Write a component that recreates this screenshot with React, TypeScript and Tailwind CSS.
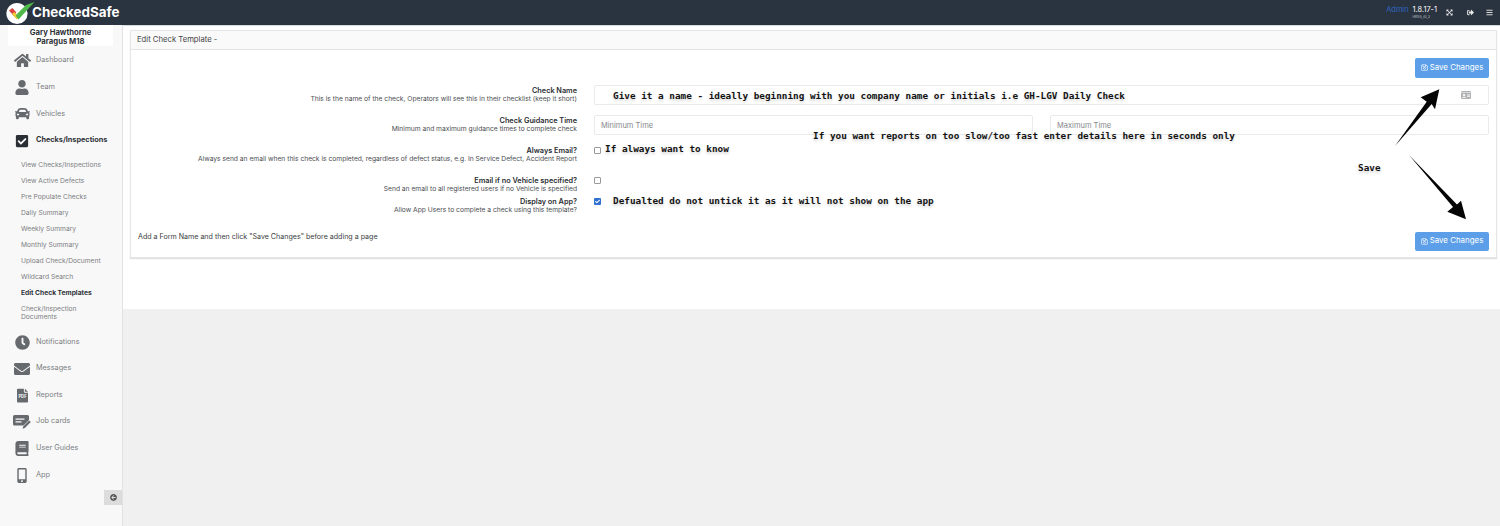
import React from "react";
import {
  FaHome, FaUser, FaCar, FaCheckSquare, FaClock, FaEnvelope, FaBook, FaMobileAlt,
  FaExpandArrowsAlt, FaSignOutAlt, FaBars, FaRegSave, FaIdCard, FaArrowCircleLeft, FaCheck,
} from "react-icons/fa";

const JobCard = ({ className }: { className?: string }) => (
  <svg viewBox="0 0 18 14" className={className} fill="currentColor">
    <path d="M1.5 0h13A1.5 1.5 0 0 1 16 1.5V5l-5.5 5.5H1.5A1.5 1.5 0 0 1 0 9V1.5A1.5 1.5 0 0 1 1.5 0z" />
    <path d="M2.5 3.5h9v1.3h-9zM2.5 6.3h6v1.3h-6z" fill="#f8f8f8" />
    <path d="M16.2 5.5l1.6 1.6-6 6-2.2.6.6-2.2z" />
  </svg>
);

const PdfFile = ({ className }: { className?: string }) => (
  <svg viewBox="0 0 12 15" className={className} fill="currentColor">
    <path d="M1 0h6.5v3.5a1 1 0 0 0 1 1H12V14a1 1 0 0 1-1 1H1a1 1 0 0 1-1-1V1a1 1 0 0 1 1-1z" />
    <path d="M8.5 0L12 3.5H8.5z" />
    <text x="6" y="10.6" textAnchor="middle" fontSize="4.6" fontWeight="700" fill="#f8f8f8" fontFamily="Inter, sans-serif">PDF</text>
  </svg>
);

const topNav = [
  { label: "Dashboard", icon: FaHome, size: "w-[17px] h-[17px]" },
  { label: "Team", icon: FaUser, size: "w-[14px] h-[15px]" },
  { label: "Vehicles", icon: FaCar, size: "w-[15px] h-[15px]" },
];
const subNav = ["View Checks/Inspections", "View Active Defects", "Pre Populate Checks", "Daily Summary", "Weekly Summary", "Monthly Summary", "Upload Check/Document", "Wildcard Search"];
const lowNav = [
  { label: "Notifications", icon: FaClock, size: "w-[15px] h-[15px]" },
  { label: "Messages", icon: FaEnvelope, size: "w-[16px] h-[16px]" },
  { label: "Reports", icon: PdfFile, size: "w-[11px] h-[15px]" },
  { label: "Job cards", icon: JobCard, size: "w-[18px] h-[14px]" },
  { label: "User Guides", icon: FaBook, size: "w-[14px] h-[15px]" },
  { label: "App", icon: FaMobileAlt, size: "w-[14px] h-[15px]" },
];

const NavRow = ({ label, icon: Icon, size, bold }: any) => (
  <div className="flex items-center h-[26.6px]">
    <div className="w-[36px] shrink-0 flex justify-center pl-[8px]">
      <Icon className={`${size} ${bold ? "text-[#2a2f36]" : "text-[#666a6e]"}`} />
    </div>
    <span className={bold ? "text-[7.3px] font-bold text-[#2f3338]" : "text-[7.3px] text-[#7c7f83]"}>{label}</span>
  </div>
);

const SaveButton = () => (
  <button className="w-[74px] h-[19.5px] rounded-[2px] bg-[#5c9fe8] text-white text-[7.9px] flex items-center justify-center gap-[2px] shrink-0">
    <FaRegSave className="w-[7px] h-[7px]" />
    Save Changes
  </button>
);

const Label = ({ title, sub }: { title: string; sub: string }) => (
  <div className="w-[439px] text-right leading-[9px] shrink-0">
    <div className="text-[7.3px] font-semibold text-[#2a2d31]">{title}</div>
    <div className="text-[6.7px] text-[#4a4d52]">{sub}</div>
  </div>
);

const Note = ({ className, children }: { className: string; children: React.ReactNode }) => (
  <div className={`absolute font-['DejaVu_Sans_Mono',monospace] font-bold text-[9.36px] leading-[12px] text-[#141414] whitespace-nowrap [text-shadow:0_2px_3px_rgba(0,0,0,0.18)] ${className}`}>{children}</div>
);

const Check = ({ checked }: { checked?: boolean }) =>
  checked ? (
    <span className="ml-[17px] w-[7px] h-[7px] mt-[1px] rounded-[1px] bg-[#2f6fd0] flex items-center justify-center">
      <FaCheck className="w-[5px] h-[5px] text-white" />
    </span>
  ) : (
    <span className="ml-[17px] w-[7px] h-[7px] mt-[1px] border border-[#9a9a9a] rounded-[1px] bg-white" />
  );

export default function App() {
  return (
    <div className="w-[1500px] h-[526px] overflow-hidden flex flex-col font-['Inter',sans-serif] bg-[#f0f0f0] relative">
      <header className="h-[25px] shrink-0 bg-[#2a3340] flex items-center relative">
        <div className="flex items-center">
          <svg viewBox="0 0 36 25" className="w-[36px] h-[25px] shrink-0 -mr-[4px]">
            <circle cx="17" cy="13.5" r="10.6" fill="#ffffff" />
            <path d="M9 10.5l3.4-2.6 4 4.6-2.6 3.6z" fill="#d8423f" />
            <path d="M12 14l2.2-2 2.6 2.6 3-2.4 1.8 1.6-4.8 5.8z" fill="#f0c93a" />
            <path d="M16.5 14.5L26 5l8.5-3L18.5 19.5 15.8 16z" fill="#4fb84a" />
          </svg>
          <span className="text-white font-bold text-[13.4px] leading-none">CheckedSafe</span>
        </div>
        <div className="ml-auto flex items-center">
          <div className="flex flex-col items-end mr-[8.5px]">
            <div className="text-[7.4px] leading-[9px] flex gap-[4px]">
              <span className="text-[#2f67c4]">Admin</span>
              <span className="text-white">1.8.17-1</span>
            </div>
            <div className="text-[3.5px] leading-[6px] text-[#c5c8cc] mr-[7px]">HR55_t0_3</div>
          </div>
          <FaExpandArrowsAlt className="w-[7px] h-[7px] text-[#e8e8e8] mr-[14px]" />
          <FaSignOutAlt className="w-[7px] h-[7px] text-[#e8e8e8] mr-[12px]" />
          <FaBars className="w-[7px] h-[7px] text-[#d8d8d8] mr-[7.5px]" />
        </div>
      </header>

      <div className="flex flex-1 min-h-0">
        <aside className="w-[123px] shrink-0 bg-[#f8f8f8] border-r border-[#e2e2e2] relative">
          <div className="mx-[8px] w-[105px] h-[21px] bg-white text-center text-[7.7px] font-bold leading-[9px] text-[#2f3338] pt-[3px]">
            Gary Hawthorne<br />Paragus M18
          </div>
          <div className="mt-[1.5px]">
            {topNav.map((n) => <NavRow key={n.label} {...n} />)}
            <NavRow label="Checks/Inspections" icon={FaCheckSquare} size="w-[14px] h-[14px]" bold />
          </div>
          <div className="mt-[3.5px] pl-[21px] text-[6.7px] text-[#7c7f83]">
            {subNav.map((s) => <div key={s} className="h-[16px] leading-[16px]">{s}</div>)}
            <div className="h-[16px] leading-[16px] font-bold text-[#2f3338]">Edit Check Templates</div>
            <div className="leading-[8px] pt-[4px] w-[70px]">Check/Inspection Documents</div>
          </div>
          <div className="mt-[7.5px]">
            {lowNav.map((n) => <NavRow key={n.label} {...n} />)}
          </div>
          <div className="absolute right-0 top-[465px] w-[18px] h-[15px] bg-[#dcdcdc] flex items-center justify-center">
            <FaArrowCircleLeft className="w-[7px] h-[7px] text-[#555]" />
          </div>
        </aside>

        <main className="flex-1 min-w-0 relative">
          <div className="h-[284px] bg-white pt-[4px] pl-[7px] pr-[3px] border-t border-[#d5dbe2]">
            <section className="border border-[#e6e6e6] h-[228px] shadow-[0_1px_1px_rgba(0,0,0,0.12)] flex flex-col">
              <div className="h-[19px] shrink-0 bg-[#fafafa] border-b border-[#e4e4e4] px-[6px] text-[7.7px] leading-[18px] text-[#444]">Edit Check Template -</div>
              <div className="flex-1 flex flex-col px-[7px]">
                <div className="flex justify-end mt-[8px]"><SaveButton /></div>
                <div className="flex items-center mt-[7px] h-[20px]">
                  <Label title="Check Name" sub="This is the name of the check, Operators will see this in their checklist (keep it short)" />
                  <div className="ml-[17px] flex-1 h-[20px] border border-[#e8ebee] rounded-[2px] flex items-center justify-end pr-[17px]">
                    <FaIdCard className="w-[10px] h-[10px] text-[#b0b2b4]" />
                  </div>
                </div>
                <div className="flex items-center mt-[10px] h-[20px]">
                  <Label title="Check Guidance Time" sub="Minimum and maximum guidance times to complete check" />
                  <div className="ml-[17px] flex-1 flex gap-[17px]">
                    <div className="flex-1 h-[20px] border border-[#e8ebee] rounded-[2px] px-[6px] text-[7.5px] leading-[20px] text-[#85888c]">Minimum Time</div>
                    <div className="flex-1 h-[20px] border border-[#e8ebee] rounded-[2px] px-[6px] text-[7.5px] leading-[20px] text-[#85888c]">Maximum Time</div>
                  </div>
                </div>
                <div className="flex mt-[11px] h-[30px]">
                  <Label title="Always Email?" sub="Always send an email when this check is completed, regardless of defect status, e.g. In Service Defect, Accident Report" />
                  <Check />
                </div>
                <div className="flex h-[21px]">
                  <Label title="Email if no Vehicle specified?" sub="Send an email to all registered users if no Vehicle is specified" />
                  <Check />
                </div>
                <div className="flex h-[26px]">
                  <Label title="Display on App?" sub="Allow App Users to complete a check using this template?" />
                  <Check checked />
                </div>
                <div className="flex items-start justify-between h-[19.5px] mt-[9px]">
                  <span className="text-[7.1px] leading-[10px] text-[#3a3d41]">Add a Form Name and then click "Save Changes" before adding a page</span>
                  <SaveButton />
                </div>
              </div>
            </section>
          </div>
        </main>
      </div>

      <Note className="left-[613px] top-[90px]">Give it a name - ideally beginning with you company name or initials i.e GH-LGV Daily Check</Note>
      <Note className="left-[813px] top-[130px]">If you want reports on too slow/too fast enter details here in seconds only</Note>
      <Note className="left-[605px] top-[143px]">If always want to know</Note>
      <Note className="left-[613px] top-[195px]">Defualted do not untick it as it will not show on the app</Note>
      <Note className="left-[1358px] top-[162px]">Save</Note>

      <svg className="absolute left-0 top-0 pointer-events-none" width="1500" height="526">
        <path d="M1395 146L1426.7 101.7 1420.7 97.3 1439.3 89.3 1435 109.3 1431.7 104z" fill="#050505" />
        <path d="M1409 155L1457 204.5 1461 200.7 1466 219.3 1447.3 211.7 1453 207z" fill="#050505" />
      </svg>
    </div>
  );
}
